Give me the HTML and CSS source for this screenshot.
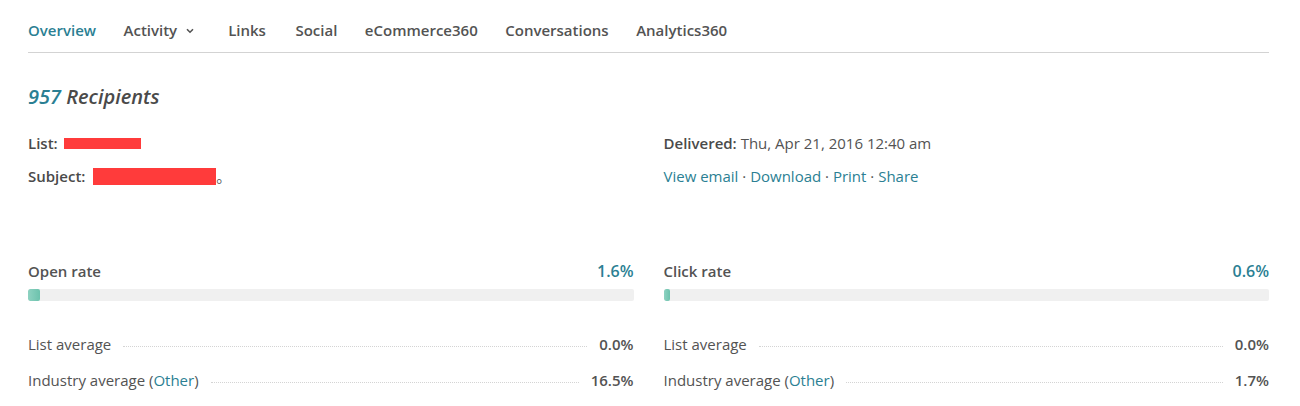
FILE: index.html
```html
<!DOCTYPE html>
<html>
<head>
<meta charset="utf-8">
<link rel="stylesheet" href="styles.css">
</head>
<body>
<div class="page">
  <nav class="tabs">
    <a class="tab active">Overview</a>
    <a class="tab dropdown">Activity <svg class="chev" width="8" height="6" viewBox="0 0 8 6"><path d="M1 1.2 L4 4.2 L7 1.2" fill="none" stroke="#535353" stroke-width="1.6"/></svg></a>
    <a class="tab tab-links">Links</a>
    <a class="tab">Social</a>
    <a class="tab">eCommerce360</a>
    <a class="tab">Conversations</a>
    <a class="tab">Analytics360</a>
  </nav>

  <h2 class="title"><span class="num">957</span> Recipients</h2>

  <div class="meta">
    <div class="col">
      <div class="line"><b>List:</b> <span class="redact r1"></span></div>
      <div class="line"><b>Subject:</b> <span class="redact r2"></span>。</div>
    </div>
    <div class="col">
      <div class="line"><b>Delivered:</b> Thu, Apr 21, 2016 12:40 am</div>
      <div class="line links"><a>View email</a> · <a>Download</a> · <a>Print</a> · <a>Share</a></div>
    </div>
  </div>

  <div class="stats">
    <div class="stat">
      <div class="stat-head"><span class="label">Open rate</span><span class="value">1.6%</span></div>
      <div class="bar"><div class="fill" style="width:12px"></div></div>
      <div class="row"><span class="rl">List average</span><span class="dots"></span><span class="rv">0.0%</span></div>
      <div class="row"><span class="rl">Industry average (<a>Other</a>)</span><span class="dots"></span><span class="rv">16.5%</span></div>
    </div>
    <div class="stat">
      <div class="stat-head"><span class="label">Click rate</span><span class="value">0.6%</span></div>
      <div class="bar"><div class="fill" style="width:6px"></div></div>
      <div class="row"><span class="rl">List average</span><span class="dots"></span><span class="rv">0.0%</span></div>
      <div class="row"><span class="rl">Industry average (<a>Other</a>)</span><span class="dots"></span><span class="rv">1.7%</span></div>
    </div>
  </div>
</div>
</body>
</html>
```
FILE: styles.css
```css
html, body { margin: 0; padding: 0; background: #fff; }
body { font-family: "Open Sans", "Noto Sans CJK SC", sans-serif; color: #535353; font-size: 15px; }
.page { width: 1241px; margin-left: 28px; }
a { color: #2b7f93; text-decoration: none; cursor: pointer; }

.tabs { display: flex; align-items: center; height: 53px; border-bottom: 1px solid #d3d3d3; padding-top: 16px; box-sizing: border-box; }
.tab { font-size: 15px; font-weight: 600; color: #535353; margin-right: 27.5px; display: flex; align-items: center; line-height: 20px; padding-bottom: 8px; }
.tab.active { color: #2b7f93; }
.tab.dropdown { margin-right: 34px; }
.tab.tab-links { margin-right: 29.5px; }
.chev { margin-left: 9px; margin-top: 1px; }

.title { margin: 31px 0 0; font-size: 20px; font-weight: 600; font-style: italic; line-height: 26px; color: #4a4a4a; }
.title .num { color: #2b7f93; }

.meta { display: flex; gap: 30px; margin-top: 22px; }
.meta .col { flex: 1; }
.line { font-size: 15px; line-height: 22px; height: 33px; }
.line b { font-weight: 600; color: #4a4a4a; }
.redact { display: inline-block; background: #ff3b3b; vertical-align: middle; }
.r1 { width: 77px; height: 11px; margin-left: 2px; margin-top: -3px; }
.r2 { width: 123px; height: 17px; margin-left: 4px; margin-top: -2px; }

.stats { display: flex; gap: 30px; margin-top: 62px; }
.stat { flex: 1; }
.stat-head { display: flex; justify-content: space-between; align-items: baseline; line-height: 22px; }
.stat-head .label { font-size: 15px; font-weight: 600; color: #535353; }
.stat-head .value { font-size: 16px; font-weight: 600; color: #2b7f93; }
.bar { height: 12px; background: #f0f0f0; border-radius: 2px; margin-top: 7px; overflow: hidden; }
.fill { height: 100%; background: linear-gradient(90deg, #8ed2c1, #6cc2ad); border-radius: 2px; }
.row { display: flex; align-items: baseline; line-height: 20px; height: 36px; }
.bar + .row { margin-top: 33px; }
.rl { font-size: 15px; color: #535353; }
.dots { flex: 1; border-bottom: 1px dotted #d4d4d4; margin: 0 12px 0 12px; transform: translateY(-3px); }
.rv { font-size: 15px; font-weight: 600; color: #535353; }
```
